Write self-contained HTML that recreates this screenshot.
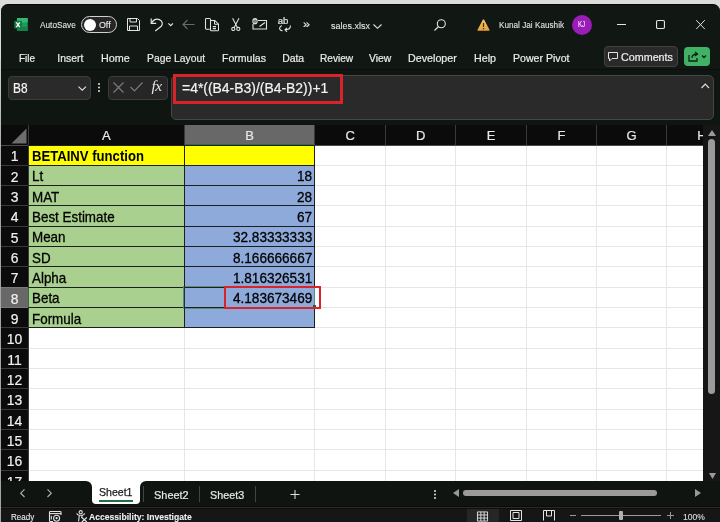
<!DOCTYPE html>
<html><head><meta charset="utf-8">
<style>
*{margin:0;padding:0;box-sizing:border-box}
html,body{width:720px;height:522px;overflow:hidden;background:#dcdddb;font-family:"Liberation Sans",sans-serif;position:relative}
.a{position:absolute;white-space:nowrap;line-height:normal;transform-origin:0 0}
svg{position:absolute;overflow:visible}
</style></head><body>
<div style="position:absolute;left:0;top:0;width:720px;height:522px;will-change:transform">
<div class="a" style="left:0;top:60px;width:1.4px;height:462px;background:linear-gradient(#d0d0d0,#a4a4a4 120px,#a4a4a4)"></div>
<div class="a" style="left:1px;top:4px;width:719px;height:518px;background:#111712;border-radius:7px 7px 0 0;border-top:1.5px solid #050805"></div>
<div class="a" style="left:1px;top:69px;width:719px;height:56px;background:#0f1510"></div>
<div class="a" style="left:1px;top:68.5px;width:719px;height:1.5px;background:#0a0f0b"></div>
<svg style="left:14px;top:18px" width="14" height="13" viewBox="0 0 14 13">
<rect x="3" y="0" width="10.7" height="13" rx="0.8" fill="#1f9a5a"/>
<rect x="3" y="0" width="10.7" height="4.4" fill="#33b877"/>
<rect x="3" y="8.7" width="10.7" height="4.3" fill="#18804a"/>
<rect x="0.2" y="2.8" width="7.8" height="7.8" rx="0.8" fill="#177a44"/>
<path d="M2.3 4.3 L5.8 9.1 M5.8 4.3 L2.3 9.1" stroke="#f2fff6" stroke-width="1.35"/>
</svg>
<div class="a" style="left:40.00px;top:20.12px;font-size:8.6px;color:#e6e6e6;transform:scaleX(0.9601);-webkit-text-stroke:0.08px #e6e6e6;">AutoSave</div>
<div class="a" style="left:81px;top:16px;width:36px;height:17px;border:1.3px solid #d0d0d0;border-radius:9px;background:#262626"></div>
<div class="a" style="left:83.6px;top:18.6px;width:12px;height:12px;border-radius:50%;background:#fff"></div>
<div class="a" style="left:99.40px;top:20.05px;font-size:9px;color:#f0f0f0;transform:scaleX(0.9779);-webkit-text-stroke:0.08px #f0f0f0;">Off</div>
<svg style="left:127px;top:18px" width="13" height="13" viewBox="0 0 13 13" fill="none" stroke="#e4e4e4" stroke-width="1">
<path d="M0.5 0.5 H10.5 L12.5 2.5 V12.5 H0.5 Z"/><path d="M3 0.5 V4 H9.5 V0.5"/><path d="M2.5 12.5 V8 H10.5 V12.5"/></svg>
<svg style="left:150px;top:18px" width="14" height="13" viewBox="0 0 14 13" fill="none" stroke="#e4e4e4" stroke-width="1.2">
<path d="M1.2 0.6 V5.4 H6.2"/><path d="M1.6 5 C3.4 1.8 6.6 0.6 9.4 1.6 C12.6 2.8 13.2 6.4 11 8.6 L5.2 13"/></svg>
<svg style="left:167.8px;top:22.8px" width="5.4" height="3.4" viewBox="0 0 5.4 3.4" fill="none" stroke="#e4e4e4" stroke-width="1.2"><path d="M0.4 0.4 L2.7 2.7 L5 0.4"/></svg>
<svg style="left:182px;top:19px" width="13" height="11" viewBox="0 0 13 11" fill="none" stroke="#6a6a6a" stroke-width="1.1"><path d="M12.5 5.5 H1 M5.5 1 L1 5.5 L5.5 10"/></svg>
<svg style="left:205px;top:18px" width="15" height="13.5" viewBox="0 0 15 13.5" fill="none" stroke="#e4e4e4" stroke-width="1.05">
<path d="M4.8 11.2 H1.5 Q0.5 11.2 0.5 10.2 V1.3 Q0.5 0.5 1.5 0.5 H4.2 Q5.5 0.5 6 2.3"/><path d="M5.5 2.5 H9.8 L13.5 6.2 V12 Q13.5 12.8 12.7 12.8 H6.3 Q5.5 12.8 5.5 12 Z"/><path d="M9.5 2.5 V5.5 Q9.5 6.2 10.2 6.2 H13.5 M7.8 8.6 H11 M7.8 10.6 H11"/></svg>
<svg style="left:230.8px;top:18.2px" width="9.6" height="13.2" viewBox="0 0 9.6 13.2" fill="none" stroke="#e4e4e4" stroke-width="1.05">
<path d="M1.6 0.3 L6.4 9.6 M8 0.3 L3.2 9.6"/><circle cx="2.3" cy="11" r="1.6"/><circle cx="7.3" cy="11" r="1.6"/></svg>
<svg style="left:251.5px;top:17.5px" width="16" height="12" viewBox="0 0 16 12" fill="none" stroke="#e4e4e4" stroke-width="1.1">
<path d="M1 6 V11 H14.5 V2.5 H6"/><path d="M7.5 8.5 L13 4.5"/><ellipse cx="3" cy="3.2" rx="2.1" ry="2.6"/><path d="M3 1 V5.5"/></svg>
<div class="a" style="left:277.8px;top:14.6px;font-size:9.6px;color:#e4e4e4;line-height:normal;letter-spacing:-0.2px;-webkit-text-stroke:0.2px #e4e4e4">ab</div>
<svg style="left:277.5px;top:24.5px" width="14" height="7" viewBox="0 0 14 7" fill="none" stroke="#e4e4e4" stroke-width="1.1">
<path d="M4 0.8 C2 1 1.3 3.2 1.8 4.2 C2.3 5.3 3.5 5.8 4.5 5.6"/><path d="M12.5 0.5 C12.5 3.5 11 4.8 7 4.8 M9 2.8 L7 4.8 L9 6.8"/></svg>
<div class="a" style="left:303.00px;top:19.35px;font-size:10px;color:#e4e4e4;transform:scaleX(1.2590);-webkit-text-stroke:0.2px #e4e4e4;">»</div>
<div class="a" style="left:330.70px;top:20.31px;font-size:9.6px;color:#e6e6e6;transform:scaleX(0.9350);-webkit-text-stroke:0.08px #e6e6e6;">sales.xlsx</div>
<svg style="left:372.5px;top:23.5px" width="9" height="5" viewBox="0 0 9 5" fill="none" stroke="#e4e4e4" stroke-width="1.1"><path d="M0.5 0.5 L4.5 4.3 L8.5 0.5"/></svg>
<svg style="left:434px;top:19px" width="12" height="12" viewBox="0 0 12 12" fill="none" stroke="#e4e4e4" stroke-width="1.1">
<circle cx="7.3" cy="4.7" r="4"/><path d="M4.5 7.5 L0.5 11.5"/></svg>
<svg style="left:476.5px;top:18.5px" width="13" height="12" viewBox="0 0 13 12">
<defs><linearGradient id="wg" x1="0" y1="0" x2="0" y2="1"><stop offset="0" stop-color="#f6c46a"/><stop offset="1" stop-color="#e59e3a"/></linearGradient></defs><path d="M6.5 0.6 Q6.9 0.3 7.2 0.8 L12.6 10.9 Q12.8 11.7 12 11.7 H1 Q0.2 11.7 0.4 10.9 L5.8 0.8 Q6.1 0.3 6.5 0.6 Z" fill="url(#wg)"/><path d="M6.5 4 V8" stroke="#3a2a10" stroke-width="1.2"/><circle cx="6.5" cy="9.7" r=".7" fill="#3a2a10"/></svg>
<div class="a" style="left:498.90px;top:20.04px;font-size:8.8px;color:#e6e6e6;transform:scaleX(0.9304);-webkit-text-stroke:0.08px #e6e6e6;">Kunal Jai Kaushik</div>
<div class="a" style="left:571.5px;top:14.5px;width:20px;height:20px;border-radius:50%;background:#9a1db8"></div>
<div class="a" style="left:578.00px;top:20.38px;font-size:8.2px;color:#f4e8f8;transform:scaleX(0.7524);-webkit-text-stroke:0.08px #f4e8f8;">KJ</div>
<svg style="left:617px;top:24px" width="10" height="2"><path d="M0 0.5 H9" stroke="#e4e4e4" stroke-width="1"/></svg>
<svg style="left:656.3px;top:20.3px" width="9" height="9" viewBox="0 0 9 9"><rect x="0.55" y="0.55" width="7.9" height="7.9" rx="1.2" fill="none" stroke="#e4e4e4" stroke-width="1.1"/></svg>
<svg style="left:695.8px;top:20px" width="9" height="9.3" viewBox="0 0 9 9.3"><path d="M0.2 0.2 L8.8 9.1 M8.8 0.2 L0.2 9.1" stroke="#e4e4e4" stroke-width="1"/></svg>
<div class="a" style="left:18.90px;top:52.59px;font-size:10.4px;color:#ececec;transform:scaleX(0.9609);-webkit-text-stroke:0.2px #ececec;">File</div>
<div class="a" style="left:57.30px;top:52.59px;font-size:10.4px;color:#ececec;-webkit-text-stroke:0.2px #ececec;">Insert</div>
<div class="a" style="left:100.70px;top:52.59px;font-size:10.4px;color:#ececec;transform:scaleX(1.0379);-webkit-text-stroke:0.2px #ececec;">Home</div>
<div class="a" style="left:146.70px;top:52.59px;font-size:10.4px;color:#ececec;transform:scaleX(0.9948);-webkit-text-stroke:0.2px #ececec;">Page Layout</div>
<div class="a" style="left:222.00px;top:52.59px;font-size:10.4px;color:#ececec;transform:scaleX(1.0151);-webkit-text-stroke:0.2px #ececec;">Formulas</div>
<div class="a" style="left:282.20px;top:52.59px;font-size:10.4px;color:#ececec;-webkit-text-stroke:0.2px #ececec;">Data</div>
<div class="a" style="left:319.80px;top:52.59px;font-size:10.4px;color:#ececec;transform:scaleX(0.9727);-webkit-text-stroke:0.2px #ececec;">Review</div>
<div class="a" style="left:369.20px;top:52.59px;font-size:10.4px;color:#ececec;transform:scaleX(0.9964);-webkit-text-stroke:0.2px #ececec;">View</div>
<div class="a" style="left:408.30px;top:52.59px;font-size:10.4px;color:#ececec;transform:scaleX(1.0316);-webkit-text-stroke:0.2px #ececec;">Developer</div>
<div class="a" style="left:474.00px;top:52.59px;font-size:10.4px;color:#ececec;transform:scaleX(1.0284);-webkit-text-stroke:0.2px #ececec;">Help</div>
<div class="a" style="left:513.00px;top:52.59px;font-size:10.4px;color:#ececec;transform:scaleX(1.0183);-webkit-text-stroke:0.2px #ececec;">Power Pivot</div>
<div class="a" style="left:604px;top:46px;width:73.5px;height:20.5px;border-radius:4px;background:#2a2a2a;border:1px solid #414141"></div>
<svg style="left:608px;top:52px" width="10" height="10" viewBox="0 0 10 10" fill="none" stroke="#e4e4e4" stroke-width="1">
<path d="M0.5 0.5 H9.5 V6.5 H4 L1.5 9 V6.5 H0.5 Z"/></svg>
<div class="a" style="left:621.00px;top:52.09px;font-size:10.4px;color:#eeeeee;transform:scaleX(1.0341);-webkit-text-stroke:0.2px #eeeeee;">Comments</div>
<div class="a" style="left:684px;top:46.8px;width:26px;height:19.4px;border-radius:4px;background:#41b265"></div>
<svg style="left:688px;top:51px" width="18" height="11" viewBox="0 0 18 11" fill="none" stroke="#0b2512" stroke-width="1.3">
<path d="M1 4 V10 H9 V7"/><path d="M4 7 C4 4 6 3 9 3 M7 1 L9.5 3 L7 5"/><path d="M14 4.5 L16 6.5 L18 4.5"/></svg>
<div class="a" style="left:8px;top:75.7px;width:83px;height:24px;border-radius:4px;background:#2a2a2a;border:1px solid #3b3b3b"></div>
<div class="a" style="left:12.60px;top:80.36px;font-size:14.3px;color:#f4f4f4;transform:scaleX(0.8291);-webkit-text-stroke:0.2px #f4f4f4;">B8</div>
<svg style="left:77.8px;top:86px" width="8.5" height="5" viewBox="0 0 9 5" fill="none" stroke="#e4e4e4" stroke-width="1.1"><path d="M0.5 0.5 L4.5 4.3 L8.5 0.5"/></svg>
<div class="a" style="left:98px;top:83px;width:2.2px;height:2.2px;background:#e0e0e0;border-radius:1.1px;box-shadow:0 3.5px 0 #e0e0e0,0 7px 0 #e0e0e0"></div>
<div class="a" style="left:107.8px;top:75.6px;width:60.4px;height:24.2px;border-radius:4px;background:#262626;border:1px solid #3c3c3c"></div>
<svg style="left:113px;top:82px" width="11" height="11" viewBox="0 0 11 11"><path d="M0.5 0.5 L10.5 10.5 M10.5 0.5 L0.5 10.5" stroke="#7a7a7a" stroke-width="1.2"/></svg>
<svg style="left:130px;top:82px" width="13" height="10" viewBox="0 0 13 10"><path d="M0.5 5 L4.5 9 L12.5 0.5" fill="none" stroke="#7a7a7a" stroke-width="1.2"/></svg>
<div class="a" style="left:151.5px;top:77px;font-family:'Liberation Serif',serif;font-style:italic;font-size:15.5px;color:#e6e6e6;line-height:normal;letter-spacing:-0.5px">fx</div>
<div class="a" style="left:171px;top:75.3px;width:542.6px;height:45px;border-radius:5px;background:#2a2a2a;border:1px solid #434844"></div>
<div class="a" style="left:173px;top:74px;width:170px;height:29.5px;border:3px solid #d8232a"></div>
<div class="a" style="left:181.70px;top:80.51px;font-size:13.8px;color:#f2f2f2;transform:scaleX(1.0093);-webkit-text-stroke:0.2px #f2f2f2;">=4*((B4-B3)/(B4-B2))+1</div>
<svg style="left:701.3px;top:83.3px" width="8.5" height="5.5" viewBox="0 0 8.5 5.5" fill="none" stroke="#e4e4e4" stroke-width="1.1"><path d="M0.5 5 L4.25 1 L8 5"/></svg>
<div class="a" style="left:1px;top:124.5px;width:702px;height:20.5px;background:#0b0b0b"></div>
<div class="a" style="left:1px;top:145px;width:27px;height:335.5px;background:#0b0b0b"></div>
<div class="a" style="left:28px;top:145px;width:675px;height:335.5px;background:#ffffff"></div>
<svg style="left:10px;top:128px" width="18" height="16" viewBox="0 0 18 16"><path d="M16.5 0.5 V15.5 H1.5 Z" fill="#6d6d6d"/></svg>
<div class="a" style="left:184.5px;top:125px;width:130.3px;height:20px;background:#686868"></div>
<div class="a" style="left:1px;top:287.31px;width:27px;height:20.33px;background:#686868"></div>
<div class="a" style="left:28px;top:164.83px;width:675px;height:1px;background:#e6e6e6"></div><div class="a" style="left:28px;top:185.16px;width:675px;height:1px;background:#e6e6e6"></div><div class="a" style="left:28px;top:205.49px;width:675px;height:1px;background:#e6e6e6"></div><div class="a" style="left:28px;top:225.82px;width:675px;height:1px;background:#e6e6e6"></div><div class="a" style="left:28px;top:246.15px;width:675px;height:1px;background:#e6e6e6"></div><div class="a" style="left:28px;top:266.48px;width:675px;height:1px;background:#e6e6e6"></div><div class="a" style="left:28px;top:286.81px;width:675px;height:1px;background:#e6e6e6"></div><div class="a" style="left:28px;top:307.14px;width:675px;height:1px;background:#e6e6e6"></div><div class="a" style="left:28px;top:327.47px;width:675px;height:1px;background:#e6e6e6"></div><div class="a" style="left:28px;top:347.80px;width:675px;height:1px;background:#e6e6e6"></div><div class="a" style="left:28px;top:368.13px;width:675px;height:1px;background:#e6e6e6"></div><div class="a" style="left:28px;top:388.46px;width:675px;height:1px;background:#e6e6e6"></div><div class="a" style="left:28px;top:408.79px;width:675px;height:1px;background:#e6e6e6"></div><div class="a" style="left:28px;top:429.12px;width:675px;height:1px;background:#e6e6e6"></div><div class="a" style="left:28px;top:449.45px;width:675px;height:1px;background:#e6e6e6"></div><div class="a" style="left:28px;top:469.78px;width:675px;height:1px;background:#e6e6e6"></div><div class="a" style="left:28px;top:490.11px;width:675px;height:1px;background:#e6e6e6"></div><div class="a" style="left:184.00px;top:145px;width:1px;height:335.5px;background:#e6e6e6"></div><div class="a" style="left:314.30px;top:145px;width:1px;height:335.5px;background:#e6e6e6"></div><div class="a" style="left:385.10px;top:145px;width:1px;height:335.5px;background:#e6e6e6"></div><div class="a" style="left:455.40px;top:145px;width:1px;height:335.5px;background:#e6e6e6"></div><div class="a" style="left:525.70px;top:145px;width:1px;height:335.5px;background:#e6e6e6"></div><div class="a" style="left:596.00px;top:145px;width:1px;height:335.5px;background:#e6e6e6"></div><div class="a" style="left:666.30px;top:145px;width:1px;height:335.5px;background:#e6e6e6"></div><div class="a" style="left:736.60px;top:145px;width:1px;height:335.5px;background:#e6e6e6"></div>
<div class="a" style="left:184.00px;top:125px;width:1px;height:20px;background:#3a3a3a"></div>
<div class="a" style="left:314.30px;top:125px;width:1px;height:20px;background:#3a3a3a"></div>
<div class="a" style="left:385.10px;top:125px;width:1px;height:20px;background:#3a3a3a"></div>
<div class="a" style="left:455.40px;top:125px;width:1px;height:20px;background:#3a3a3a"></div>
<div class="a" style="left:525.70px;top:125px;width:1px;height:20px;background:#3a3a3a"></div>
<div class="a" style="left:596.00px;top:125px;width:1px;height:20px;background:#3a3a3a"></div>
<div class="a" style="left:666.30px;top:125px;width:1px;height:20px;background:#3a3a3a"></div>
<div class="a" style="left:736.60px;top:125px;width:1px;height:20px;background:#3a3a3a"></div>
<div class="a" style="left:1px;top:144.5px;width:702px;height:1px;background:#4a4a4a"></div>
<div class="a" style="left:1px;top:164.83px;width:27px;height:1px;background:#3a3a3a"></div>
<div class="a" style="left:1px;top:185.16px;width:27px;height:1px;background:#3a3a3a"></div>
<div class="a" style="left:1px;top:205.49px;width:27px;height:1px;background:#3a3a3a"></div>
<div class="a" style="left:1px;top:225.82px;width:27px;height:1px;background:#3a3a3a"></div>
<div class="a" style="left:1px;top:246.15px;width:27px;height:1px;background:#3a3a3a"></div>
<div class="a" style="left:1px;top:266.48px;width:27px;height:1px;background:#3a3a3a"></div>
<div class="a" style="left:1px;top:286.81px;width:27px;height:1px;background:#3a3a3a"></div>
<div class="a" style="left:1px;top:307.14px;width:27px;height:1px;background:#3a3a3a"></div>
<div class="a" style="left:1px;top:327.47px;width:27px;height:1px;background:#3a3a3a"></div>
<div class="a" style="left:1px;top:347.80px;width:27px;height:1px;background:#3a3a3a"></div>
<div class="a" style="left:1px;top:368.13px;width:27px;height:1px;background:#3a3a3a"></div>
<div class="a" style="left:1px;top:388.46px;width:27px;height:1px;background:#3a3a3a"></div>
<div class="a" style="left:1px;top:408.79px;width:27px;height:1px;background:#3a3a3a"></div>
<div class="a" style="left:1px;top:429.12px;width:27px;height:1px;background:#3a3a3a"></div>
<div class="a" style="left:1px;top:449.45px;width:27px;height:1px;background:#3a3a3a"></div>
<div class="a" style="left:1px;top:469.78px;width:27px;height:1px;background:#3a3a3a"></div>
<div class="a" style="left:1px;top:490.11px;width:27px;height:1px;background:#3a3a3a"></div>
<div class="a" style="left:27.5px;top:125px;width:1px;height:355.5px;background:#3a3a3a"></div>
<div class="a" style="left:184.5px;top:144px;width:130.3px;height:1.3px;background:#356b3c"></div>
<div class="a" style="left:1px;top:286.71px;width:27px;height:1.2px;background:#7a7a7a"></div>
<div class="a" style="left:1px;top:307.04px;width:27px;height:1.2px;background:#7a7a7a"></div>
<div class="a" style="left:27.6px;top:287.31px;width:1.2px;height:20.33px;background:#2f7040"></div>
<div class="a" style="left:101.91px;top:128.44px;font-size:13px;color:#e8e8e8;-webkit-text-stroke:0.2px #e8e8e8;">A</div>
<div class="a" style="left:245.31px;top:128.44px;font-size:13px;color:#e8e8e8;-webkit-text-stroke:0.2px #e8e8e8;">B</div>
<div class="a" style="left:345.51px;top:128.44px;font-size:13px;color:#e8e8e8;-webkit-text-stroke:0.2px #e8e8e8;">C</div>
<div class="a" style="left:416.06px;top:128.44px;font-size:13px;color:#e8e8e8;-webkit-text-stroke:0.2px #e8e8e8;">D</div>
<div class="a" style="left:486.71px;top:128.44px;font-size:13px;color:#e8e8e8;-webkit-text-stroke:0.2px #e8e8e8;">E</div>
<div class="a" style="left:557.38px;top:128.44px;font-size:13px;color:#e8e8e8;-webkit-text-stroke:0.2px #e8e8e8;">F</div>
<div class="a" style="left:626.59px;top:128.44px;font-size:13px;color:#e8e8e8;-webkit-text-stroke:0.2px #e8e8e8;">G</div>
<div class="a" style="left:697.26px;top:128.44px;font-size:13px;color:#e8e8e8;-webkit-text-stroke:0.2px #e8e8e8;">H</div>
<div class="a" style="left:10.64px;top:148.22px;font-size:13.9px;color:#f0f0f0;-webkit-text-stroke:0.2px #f0f0f0;">1</div>
<div class="a" style="left:10.64px;top:168.55px;font-size:13.9px;color:#f0f0f0;-webkit-text-stroke:0.2px #f0f0f0;">2</div>
<div class="a" style="left:10.64px;top:188.88px;font-size:13.9px;color:#f0f0f0;-webkit-text-stroke:0.2px #f0f0f0;">3</div>
<div class="a" style="left:10.64px;top:209.21px;font-size:13.9px;color:#f0f0f0;-webkit-text-stroke:0.2px #f0f0f0;">4</div>
<div class="a" style="left:10.64px;top:229.54px;font-size:13.9px;color:#f0f0f0;-webkit-text-stroke:0.2px #f0f0f0;">5</div>
<div class="a" style="left:10.64px;top:249.87px;font-size:13.9px;color:#f0f0f0;-webkit-text-stroke:0.2px #f0f0f0;">6</div>
<div class="a" style="left:10.64px;top:270.20px;font-size:13.9px;color:#f0f0f0;-webkit-text-stroke:0.2px #f0f0f0;">7</div>
<div class="a" style="left:10.64px;top:290.53px;font-size:13.9px;color:#f0f0f0;-webkit-text-stroke:0.2px #f0f0f0;">8</div>
<div class="a" style="left:10.64px;top:310.86px;font-size:13.9px;color:#f0f0f0;-webkit-text-stroke:0.2px #f0f0f0;">9</div>
<div class="a" style="left:6.77px;top:331.19px;font-size:13.9px;color:#f0f0f0;-webkit-text-stroke:0.2px #f0f0f0;">10</div>
<div class="a" style="left:7.29px;top:351.52px;font-size:13.9px;color:#f0f0f0;-webkit-text-stroke:0.2px #f0f0f0;">11</div>
<div class="a" style="left:6.77px;top:371.85px;font-size:13.9px;color:#f0f0f0;-webkit-text-stroke:0.2px #f0f0f0;">12</div>
<div class="a" style="left:6.77px;top:392.18px;font-size:13.9px;color:#f0f0f0;-webkit-text-stroke:0.2px #f0f0f0;">13</div>
<div class="a" style="left:6.77px;top:412.51px;font-size:13.9px;color:#f0f0f0;-webkit-text-stroke:0.2px #f0f0f0;">14</div>
<div class="a" style="left:6.77px;top:432.84px;font-size:13.9px;color:#f0f0f0;-webkit-text-stroke:0.2px #f0f0f0;">15</div>
<div class="a" style="left:6.77px;top:453.17px;font-size:13.9px;color:#f0f0f0;-webkit-text-stroke:0.2px #f0f0f0;">16</div>
<div class="a" style="left:6.77px;top:473.50px;font-size:13.9px;color:#f0f0f0;-webkit-text-stroke:0.2px #f0f0f0;">17</div>
<div class="a" style="left:28.5px;top:145.5px;width:286.3px;height:20.33px;background:#ffff00"></div>
<div class="a" style="left:28.5px;top:165.32999999999998px;width:156.2px;height:162.64px;background:#a9d08e"></div>
<div class="a" style="left:184.5px;top:165.32999999999998px;width:130.3px;height:162.64px;background:#8eaadb"></div>
<div class="a" style="left:28px;top:144.50px;width:287px;height:1px;background:#1e1e1e"></div><div class="a" style="left:28px;top:164.83px;width:287px;height:1px;background:#1e1e1e"></div><div class="a" style="left:28px;top:185.16px;width:287px;height:1px;background:#1e1e1e"></div><div class="a" style="left:28px;top:205.49px;width:287px;height:1px;background:#1e1e1e"></div><div class="a" style="left:28px;top:225.82px;width:287px;height:1px;background:#1e1e1e"></div><div class="a" style="left:28px;top:246.15px;width:287px;height:1px;background:#1e1e1e"></div><div class="a" style="left:28px;top:266.48px;width:287px;height:1px;background:#1e1e1e"></div><div class="a" style="left:28px;top:286.81px;width:287px;height:1px;background:#1e1e1e"></div><div class="a" style="left:28px;top:307.14px;width:287px;height:1px;background:#1e1e1e"></div><div class="a" style="left:28px;top:327.47px;width:287px;height:1px;background:#1e1e1e"></div><div class="a" style="left:184.00px;top:145px;width:1px;height:182.96999999999997px;background:#1e1e1e"></div><div class="a" style="left:314.30px;top:145px;width:1px;height:182.96999999999997px;background:#1e1e1e"></div>
<div class="a" style="left:32.00px;top:148.05px;font-size:14.2px;color:#000000;font-weight:bold;transform:scaleX(0.9240);">BETAINV function</div>
<div class="a" style="left:32.30px;top:168.38px;font-size:14.2px;color:#000000;transform:scaleX(0.9441);-webkit-text-stroke:0.3px #000;">Lt</div>
<div class="a" style="left:32.30px;top:188.71px;font-size:14.2px;color:#000000;transform:scaleX(0.9441);-webkit-text-stroke:0.3px #000;">MAT</div>
<div class="a" style="left:32.30px;top:209.04px;font-size:14.2px;color:#000000;transform:scaleX(0.9441);-webkit-text-stroke:0.3px #000;">Best Estimate</div>
<div class="a" style="left:32.30px;top:229.37px;font-size:14.2px;color:#000000;transform:scaleX(0.9441);-webkit-text-stroke:0.3px #000;">Mean</div>
<div class="a" style="left:32.30px;top:249.70px;font-size:14.2px;color:#000000;transform:scaleX(0.9441);-webkit-text-stroke:0.3px #000;">SD</div>
<div class="a" style="left:32.30px;top:270.03px;font-size:14.2px;color:#000000;transform:scaleX(0.9441);-webkit-text-stroke:0.3px #000;">Alpha</div>
<div class="a" style="left:32.30px;top:290.36px;font-size:14.2px;color:#000000;transform:scaleX(0.9441);-webkit-text-stroke:0.3px #000;">Beta</div>
<div class="a" style="left:32.30px;top:310.69px;font-size:14.2px;color:#000000;transform:scaleX(0.9441);-webkit-text-stroke:0.3px #000;">Formula</div>
<div class="a" style="left:297.10px;top:168.20px;font-size:14.4px;color:#000000;transform:scaleX(0.9431);-webkit-text-stroke:0.3px #000;">18</div>
<div class="a" style="left:297.10px;top:188.53px;font-size:14.4px;color:#000000;transform:scaleX(0.9431);-webkit-text-stroke:0.3px #000;">28</div>
<div class="a" style="left:297.10px;top:208.86px;font-size:14.4px;color:#000000;transform:scaleX(0.9431);-webkit-text-stroke:0.3px #000;">67</div>
<div class="a" style="left:232.90px;top:229.19px;font-size:14.4px;color:#000000;transform:scaleX(0.9431);-webkit-text-stroke:0.3px #000;">32.83333333</div>
<div class="a" style="left:232.90px;top:249.52px;font-size:14.4px;color:#000000;transform:scaleX(0.9431);-webkit-text-stroke:0.3px #000;">8.166666667</div>
<div class="a" style="left:232.90px;top:269.85px;font-size:14.4px;color:#000000;transform:scaleX(0.9431);-webkit-text-stroke:0.3px #000;">1.816326531</div>
<div class="a" style="left:232.90px;top:290.18px;font-size:14.4px;color:#000000;transform:scaleX(0.9431);-webkit-text-stroke:0.3px #000;">4.183673469</div>
<div class="a" style="left:183.3px;top:285.81px;width:132.1px;height:22.83px;border:1.6px solid #558e7c"></div>
<div class="a" style="left:183.8px;top:285.81px;width:1.2px;height:22.83px;background:#22332c"></div>
<div class="a" style="left:312.6px;top:305px;width:3.5px;height:3px;background:#2d5a3a"></div>
<div class="a" style="left:223.5px;top:286.3px;width:97.2px;height:23.2px;border:2.7px solid #d8232a"></div>
<div class="a" style="left:703px;top:124.5px;width:17px;height:356.0px;background:#161616"></div>
<svg style="left:707.5px;top:129.5px" width="8" height="6" viewBox="0 0 8 6"><path d="M4 0 L8 6 H0 Z" fill="#9a9a9a"/></svg>
<div class="a" style="left:708px;top:139px;width:7px;height:255px;border-radius:3.5px;background:#9b9b9b"></div>
<svg style="left:708.5px;top:472.5px" width="7" height="6" viewBox="0 0 7 6"><path d="M0 0 H7 L3.5 6 Z" fill="#9a9a9a"/></svg>
<div class="a" style="left:1px;top:481px;width:719px;height:41px;background:#101410"></div>
<div class="a" style="left:86px;top:481px;width:60px;height:8px;background:#ffffff"></div>
<div class="a" style="left:1px;top:481px;width:90.7px;height:25px;background:#101410;border-radius:0 6px 0 0"></div>
<div class="a" style="left:140px;top:481px;width:580px;height:25px;background:#101410;border-radius:6px 0 0 0"></div>
<div class="a" style="left:91.7px;top:480px;width:48.3px;height:24px;background:#ffffff;border-radius:0 0 4px 4px"></div>
<div class="a" style="left:98.90px;top:485.76px;font-size:11.2px;color:#1a1a1a;transform:scaleX(0.9439);-webkit-text-stroke:0.25px #1a1a1a;">Sheet1</div>
<div class="a" style="left:98.9px;top:500px;width:34px;height:2px;background:#217045"></div>
<div class="a" style="left:153.70px;top:489.16px;font-size:11.2px;color:#e8e8e8;transform:scaleX(0.9777);-webkit-text-stroke:0.2px #e8e8e8;">Sheet2</div>
<div class="a" style="left:209.70px;top:489.16px;font-size:11.2px;color:#e8e8e8;transform:scaleX(0.9636);-webkit-text-stroke:0.2px #e8e8e8;">Sheet3</div>
<div class="a" style="left:142.8px;top:486.3px;width:1px;height:15.7px;background:#3d4842"></div>
<div class="a" style="left:198.5px;top:486.3px;width:1px;height:15.7px;background:#3d4842"></div>
<div class="a" style="left:255.2px;top:486.3px;width:1px;height:15.7px;background:#3d4842"></div>
<svg style="left:290px;top:489.8px" width="10" height="9" viewBox="0 0 10 9"><path d="M5 0 V9 M0.5 4.5 H9.5" stroke="#e4e4e4" stroke-width="1"/></svg>
<svg style="left:20px;top:489px" width="5" height="8.3" viewBox="0 0 5 8.3"><path d="M4.5 0.3 L0.7 4.15 L4.5 8" fill="none" stroke="#b4b4b4" stroke-width="1.1"/></svg>
<svg style="left:47.2px;top:489px" width="5" height="8.3" viewBox="0 0 5 8.3"><path d="M0.5 0.3 L4.3 4.15 L0.5 8" fill="none" stroke="#b4b4b4" stroke-width="1.1"/></svg>
<div class="a" style="left:434.3px;top:489.8px;width:2.2px;height:2.2px;background:#e0e0e0;border-radius:1.1px;box-shadow:0 3.5px 0 #e0e0e0,0 7px 0 #e0e0e0"></div>
<svg style="left:453px;top:489.3px" width="6" height="8" viewBox="0 0 6 8"><path d="M6 0 V8 L0 4 Z" fill="#9a9a9a"/></svg>
<div class="a" style="left:463.2px;top:489.6px;width:193.8px;height:6.8px;border-radius:3.5px;background:#9b9b9b"></div>
<svg style="left:695px;top:489.3px" width="6" height="8" viewBox="0 0 6 8"><path d="M0 0 V8 L6 4 Z" fill="#9a9a9a"/></svg>
<div class="a" style="left:1px;top:506px;width:719px;height:16px;background:#161616"></div>
<div class="a" style="left:1px;top:506px;width:719px;height:1px;background:#0b0b0b"></div>
<div class="a" style="left:1px;top:507px;width:719px;height:1px;background:#2b2b2b"></div>
<div class="a" style="left:1px;top:508px;width:719px;height:1px;background:#0e0e0e"></div>
<div class="a" style="left:10.60px;top:511.49px;font-size:9.4px;color:#ececec;transform:scaleX(0.8574);-webkit-text-stroke:0.08px #ececec;">Ready</div>
<svg style="left:49px;top:511px" width="12.5" height="11" viewBox="0 0 12.5 11" fill="none" stroke="#e4e4e4" stroke-width="1.1">
<path d="M4 10.5 H1.3 Q0.5 10.5 0.5 9.7 V1.3 Q0.5 0.5 1.3 0.5 H11.2 Q12 0.5 12 1.3 V4"/><path d="M0.5 2.6 H12"/><path d="M2.3 4.8 V8.5"/><circle cx="7.6" cy="7.2" r="3"/><circle cx="7.6" cy="7.2" r="1.1" fill="#e4e4e4" stroke="none"/></svg>
<svg style="left:75.5px;top:510px" width="11.5" height="12" viewBox="0 0 11.5 12" fill="none" stroke="#e4e4e4" stroke-width="1.1">
<circle cx="4.7" cy="2.2" r="1.6"/><path d="M0.8 3.2 Q1 5 3.2 5.2 H6.2 Q8.4 5 8.6 3.2"/><path d="M3.3 5.2 L2.6 11.5 M6.1 5.2 L5.6 8"/><path d="M5.8 7.5 L10.8 12 M10.8 7.5 L5.8 12"/></svg>
<div class="a" style="left:89.40px;top:511.67px;font-size:9.2px;color:#f0f0f0;font-weight:bold;transform:scaleX(0.9351);-webkit-text-stroke:0.08px #f0f0f0;">Accessibility: Investigate</div>
<div class="a" style="left:466.7px;top:509px;width:32.3px;height:13px;background:#262626"></div>
<svg style="left:476.5px;top:510.5px" width="11" height="11" viewBox="0 0 12 11" fill="none" stroke="#e4e4e4" stroke-width="1">
<path d="M0.5 0.5 H11.5 V10.5 H0.5 Z M0.5 3.8 H11.5 M0.5 7.2 H11.5 M4.2 0.5 V10.5 M7.8 0.5 V10.5"/></svg>
<svg style="left:509.8px;top:510px" width="12" height="11" viewBox="0 0 12 11" fill="none" stroke="#e4e4e4" stroke-width="1">
<path d="M0.5 0.5 H11.5 V10.5 H0.5 Z M3 2.5 H9 V8.5 H3 Z"/></svg>
<svg style="left:542.5px;top:509.5px" width="12" height="11" viewBox="0 0 12 11" fill="none" stroke="#e4e4e4" stroke-width="1">
<path d="M0.5 10.5 V0.5 H11.5 V10.5 M3.5 0.5 V6 H8.5 V0.5"/></svg>
<div class="a" style="left:570px;top:515px;width:5.5px;height:1px;background:#9a9a9a"></div>
<div class="a" style="left:581px;top:515px;width:80px;height:1px;background:#9a9a9a"></div>
<div class="a" style="left:618.8px;top:511px;width:4.4px;height:9px;background:#b0b0b0;border-radius:1px"></div>
<svg style="left:666.5px;top:512px" width="7" height="7" viewBox="0 0 7 7"><path d="M3.5 0 V7 M0 3.5 H7" stroke="#9a9a9a" stroke-width="1"/></svg>
<div class="a" style="left:683.00px;top:511.67px;font-size:9.2px;color:#e0e0e0;transform:scaleX(0.9263);-webkit-text-stroke:0.08px #e0e0e0;">100%</div>
</div></body></html>
